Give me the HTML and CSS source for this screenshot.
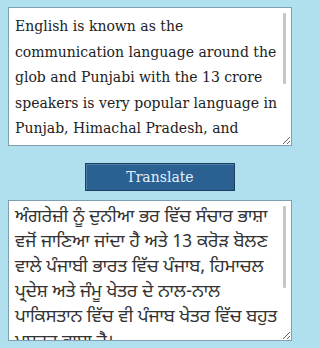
FILE: index.html
```html
<!DOCTYPE html>
<html lang="en">
<head>
<meta charset="utf-8">
<title>Translate</title>
<link rel="stylesheet" href="styles.css">
</head>
<body>
<main class="app">
  <div class="field">
    <textarea class="box box-source" readonly>English is known as the communication language around the glob and Punjabi with the 13 crore speakers is very popular language in Punjab, Himachal Pradesh, and Jammu region as well as in the Punjab region in Pakistan.</textarea>
    <span class="thumb thumb-source"></span>
  </div>
  <div class="actions">
    <button class="btn" type="button">Translate</button>
  </div>
  <div class="field">
    <textarea class="box box-target" lang="pa" readonly>ਅੰਗਰੇਜ਼ੀ ਨੂੰ ਦੁਨੀਆ ਭਰ ਵਿੱਚ ਸੰਚਾਰ ਭਾਸ਼ਾ ਵਜੋਂ ਜਾਣਿਆ ਜਾਂਦਾ ਹੈ ਅਤੇ 13 ਕਰੋੜ ਬੋਲਣ ਵਾਲੇ ਪੰਜਾਬੀ ਭਾਰਤ ਵਿੱਚ ਪੰਜਾਬ, ਹਿਮਾਚਲ ਪ੍ਰਦੇਸ਼ ਅਤੇ ਜੰਮੂ ਖੇਤਰ ਦੇ ਨਾਲ-ਨਾਲ ਪਾਕਿਸਤਾਨ ਵਿੱਚ ਵੀ ਪੰਜਾਬ ਖੇਤਰ ਵਿੱਚ ਬਹੁਤ ਮਸ਼ਹੂਰ ਭਾਸ਼ਾ ਹੈ।</textarea>
    <span class="thumb thumb-target"></span>
  </div>
</main>
</body>
</html>
```
FILE: styles.css
```css
html, body {
  margin: 0;
  padding: 0;
  background: #b0e0ee;
}
.app {
  display: flex;
  flex-direction: column;
  padding: 7px 8px;
}
.field {
  position: relative;
  width: 284px;
}
.box {
  display: block;
  box-sizing: border-box;
  width: 284px;
  margin: 0;
  border: 1px solid #7f9fb3;
  background: #ffffff;
  color: #222222;
  resize: both;
  overflow-y: scroll;
  outline: none;
}
.box::-webkit-scrollbar {
  width: 9px;
}
.box::-webkit-scrollbar-track {
  background: #ffffff;
}
.box::-webkit-scrollbar-thumb {
  background: transparent;
}
.thumb {
  position: absolute;
  right: 6px;
  width: 3px;
  border-radius: 1px;
  background: #c6c6c6;
}
.thumb-source {
  top: 6px;
  height: 71px;
}
.thumb-target {
  top: 6px;
  height: 82px;
}
.box-source {
  height: 139px;
  padding: 6px 4px 4px 6px;
  font-family: "DejaVu Serif", "Liberation Serif", serif;
  font-size: 14px;
  line-height: 25.5px;
}
.box-target {
  height: 141px;
  padding: 4px 4px 4px 6px;
  font-family: "Noto Sans Gurmukhi", "Lohit Gurmukhi", "Raavi", "Noto Sans", sans-serif;
  font-size: 18px;
  line-height: 25px;
  color: #333333;
}
.actions {
  display: flex;
  justify-content: center;
  padding: 17px 0 9px;
}
.btn {
  width: 150px;
  height: 28px;
  margin: 0;
  padding: 0;
  border: 1px solid #1d3f5e;
  background: #2b6092;
  color: #e2f1fb;
  font-family: "DejaVu Serif", "Liberation Serif", serif;
  font-size: 14px;
  box-shadow: 1px 1px 0 #4d7fa8 inset;
}
```
